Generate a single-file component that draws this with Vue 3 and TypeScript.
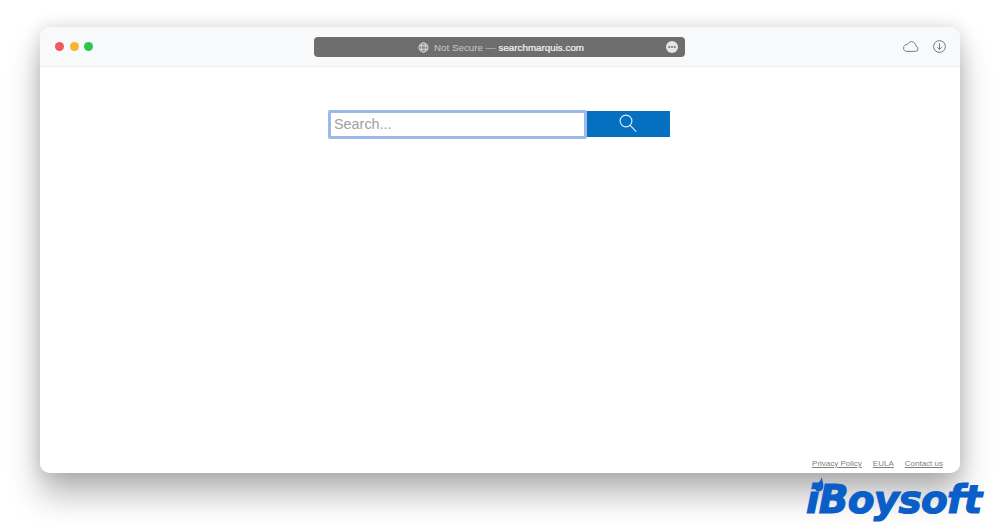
<script setup lang="ts">
const links: string[] = ['Privacy Policy', 'EULA', 'Contact us']
</script>

<template>
  <div class="page">
    <div class="window">
      <header class="titlebar">
        <div class="lights">
          <span class="light red"></span>
          <span class="light yellow"></span>
          <span class="light green"></span>
        </div>
        <div class="address">
          <svg class="globe" width="11" height="11" viewBox="0 0 12 12" fill="#8a8a8a" stroke="#dcdcdc" stroke-width="1">
            <circle cx="6" cy="6" r="5" />
            <ellipse cx="6" cy="6" rx="2.3" ry="5" />
            <path d="M1.2 4h9.6M1.2 8h9.6" />
          </svg>
          <span class="insecure">Not Secure —</span>
          <span class="domain">searchmarquis.com</span>
          <svg class="more" width="12" height="12" viewBox="0 0 12 12">
            <circle cx="6" cy="6" r="6" fill="#e6e6e6" />
            <circle cx="3.2" cy="6" r="1" fill="#6e6e6e" />
            <circle cx="6" cy="6" r="1" fill="#6e6e6e" />
            <circle cx="8.8" cy="6" r="1" fill="#6e6e6e" />
          </svg>
        </div>
        <div class="tools">
          <svg width="16" height="11" viewBox="0 0 16 11" fill="none" stroke="#6f6f6f" stroke-width="0.9">
            <path d="M3.6 10.4h9a2.6 2.6 0 0 0 .5-5.1C12.7 2.5 10.700 .6 8.500 .6 6.700 .6 5.400 1.700 4.700 3.300 2.400 3.300 .5 5 .5 7.100c0 1.900 1.300 3.300 3.100 3.300z" />
          </svg>
          <svg width="13" height="13" viewBox="0 0 13 13" fill="none" stroke="#6a6a6a" stroke-width="0.9">
            <circle cx="6.500" cy="6.500" r="5.900" />
            <path d="M6.500 3.300v6M4.200 7.100l2.300 2.300 2.300-2.300" />
          </svg>
        </div>
      </header>

      <main class="content">
        <form class="search" @submit.prevent>
          <input class="field" type="text" placeholder="Search..." />
          <button class="go" type="submit" aria-label="Search">
            <svg width="18" height="19" viewBox="0 0 18 19" fill="none" stroke="#e4eef8" stroke-width="1.100">
              <circle cx="7" cy="7" r="5.900" />
              <path d="M11.200 11.300l6 6.400" />
            </svg>
          </button>
        </form>

        <footer class="links">
          <a v-for="link in links" :key="link" class="link">{{ link }}</a>
        </footer>
      </main>
    </div>

    <div class="logo">
      <span class="wordmark">iBoysoft</span>
      <svg class="drop" width="9" height="15" viewBox="0 0 9 15">
        <path d="M6.800 0C6.900 3 8.700 6 8.400 9.500 8.100 12.700 6 14.500 3.500 14.500 1.300 14.500 0 13 .3 10.800.7 7.300 5.600 5 6.800 0z" fill="#0a5ec8" />
      </svg>
    </div>
  </div>
</template>

<style>
html, body { margin: 0; background: #fff; }
</style>

<style scoped>
.page {
  position: relative;
  width: 1000px;
  height: 527px;
  padding: 27px 40px 0;
  box-sizing: border-box;
  overflow: hidden;
  background: #fff;
  font-family: "Liberation Sans", Arial, sans-serif;
}
.window {
  display: flex;
  flex-direction: column;
  height: 446px;
  border-radius: 10px;
  background: #fff;
  overflow: hidden;
  box-shadow: 0 22px 32px rgba(0, 0, 0, 0.28), 0 0 18px rgba(0, 0, 0, 0.14);
}
.titlebar {
  display: grid;
  grid-template-columns: 1fr 371px 1fr;
  align-items: center;
  height: 39px;
  box-sizing: content-box;
  background: #f8f9fb;
  border-bottom: 1px solid #eeeeef;
}
.lights {
  display: flex;
  gap: 5.500px;
  padding-left: 15px;
}
.light {
  width: 9px;
  height: 9px;
  border-radius: 50%;
}
.red { background: #f4575a; }
.yellow { background: #f9b52f; }
.green { background: #2ec64a; }
.address {
  position: relative;
  left: -1px;
  display: flex;
  align-items: center;
  justify-content: center;
  height: 20px;
  margin-top: 1px;
  border-radius: 4px;
  background: #6e6e6e;
  font-size: 9.800px;
  color: #c8c8c8;
  padding-left: 4px;
  box-sizing: border-box;
}
.globe { margin-right: 5px; }
.insecure { margin-right: 3px; }
.domain { color: #f4f4f4; -webkit-text-stroke: 0.2px #f4f4f4; }
.more {
  position: absolute;
  right: 7px;
  top: 4px;
}
.tools {
  display: flex;
  justify-content: flex-end;
  align-items: center;
  gap: 14px;
  padding-right: 14px;
}
.content {
  position: relative;
  flex: 1;
  background: #fff;
}
.search {
  display: flex;
  width: 342px;
  margin: 43px 0 0 288px;
}
.field {
  position: relative;
  z-index: 1;
  width: 259px;
  height: 29px;
  box-sizing: border-box;
  border: 3px solid #9db8ea;
  border-radius: 2px;
  outline: none;
  padding: 0 3px 2px;
  font: 14.400px "Liberation Sans", Arial, sans-serif;
  background: #fff;
  color: #333;
}
.field::placeholder { color: #a0a0a0; opacity: 1; }
.go {
  display: flex;
  align-items: center;
  justify-content: center;
  width: 85px;
  height: 26px;
  margin: 1px 0 0 -2px;
  padding: 0 0 1px;
  border: 0;
  background: #0470bf;
}
.links {
  position: absolute;
  right: 17px;
  bottom: 4px;
  display: flex;
  gap: 11px;
  font-size: 8px;
  line-height: 11px;
  color: #7f7f7f;
}
.link { text-decoration: underline; }
.logo {
  position: absolute;
  left: 806px;
  top: 476px;
  width: 180px;
  height: 51px;
}
.wordmark {
  position: absolute;
  left: 0;
  top: -2px;
  font: italic 700 39px/51px "DejaVu Sans", Verdana, sans-serif;
  letter-spacing: -0.700px;
  color: #0a5ec8;
  -webkit-text-stroke: 1.200px #0a5ec8;
}
.drop {
  position: absolute;
  left: 9px;
  top: 1px;
}
</style>
